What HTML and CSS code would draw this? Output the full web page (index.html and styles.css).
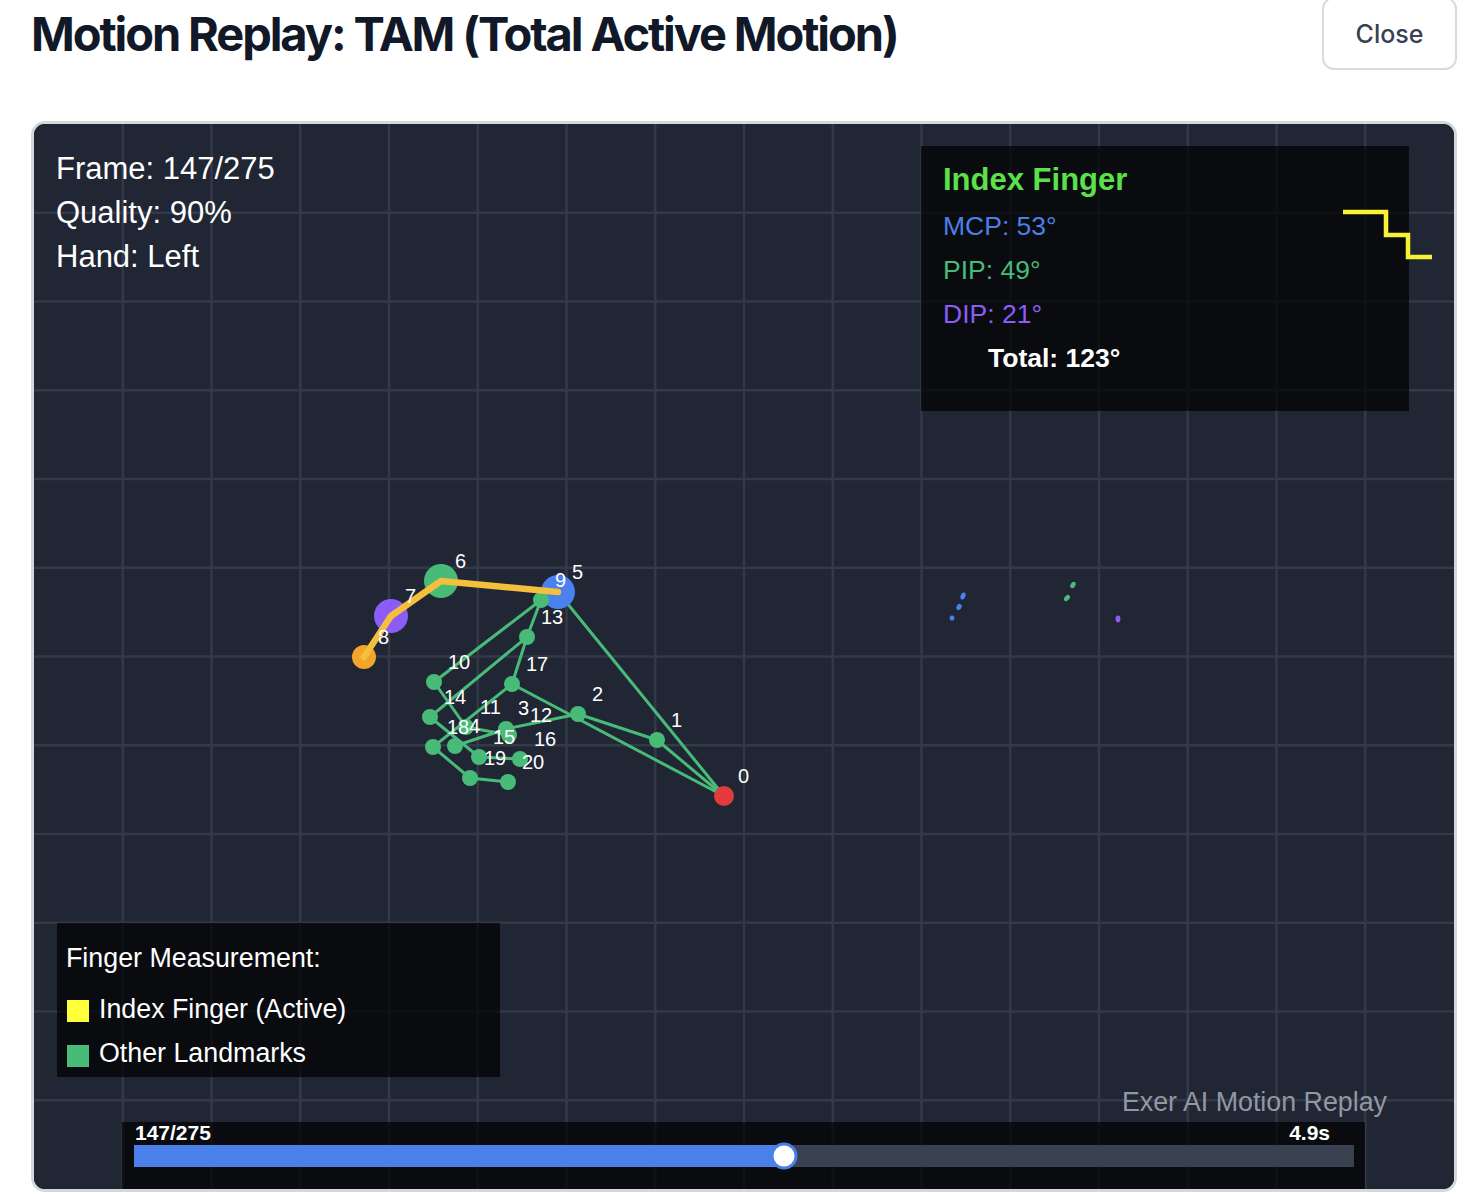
FILE: index.html
```html
<!DOCTYPE html>
<html lang="en">
<head>
<meta charset="utf-8">
<title>Motion Replay</title>
<link rel="stylesheet" href="styles.css">
</head>
<body>
<div class="page">
  <header class="header">
    <h1 class="title">Motion Replay: TAM (Total Active Motion)</h1>
    <button class="close-btn" type="button">Close</button>
  </header>
  <div class="stage">
    <svg class="replay" viewBox="0 0 1420 1065" xmlns="http://www.w3.org/2000/svg">
      <g transform="translate(-34 -124)">
        <rect class="bg" x="34" y="124" width="1420" height="1065"/>
        <path class="grid" d="M122.75 124V1189M211.5 124V1189M300.25 124V1189M389 124V1189M477.75 124V1189M566.5 124V1189M655.25 124V1189M744 124V1189M832.75 124V1189M921.5 124V1189M1010.25 124V1189M1099 124V1189M1187.75 124V1189M1276.5 124V1189M1365.25 124V1189M34 212.75H1454M34 301.5H1454M34 390.25H1454M34 479H1454M34 567.75H1454M34 656.5H1454M34 745.25H1454M34 834H1454M34 922.75H1454M34 1011.5H1454M34 1100.25H1454"/>

        <!-- info -->
        <text class="info" x="56" y="179">Frame: 147/275</text>
        <text class="info" x="56" y="223">Quality: 90%</text>
        <text class="info" x="56" y="267">Hand: Left</text>

        <!-- finger panel -->
        <rect class="panel" x="921" y="146" width="488" height="265"/>
        <text class="fp-title" x="943" y="190">Index Finger</text>
        <text class="fp-row mcp" x="943" y="235">MCP: 53°</text>
        <text class="fp-row pip" x="943" y="279">PIP: 49°</text>
        <text class="fp-row dip" x="943" y="323">DIP: 21°</text>
        <text class="fp-total" x="988" y="367">Total: 123°</text>
        <path class="step" d="M1343 212H1386V235H1408V257H1432"/>

        <!-- trail dots -->
        <g class="trail">
          <ellipse class="t-blue" cx="963" cy="596" rx="2.4" ry="3.6" transform="rotate(20 963 596)"/>
          <ellipse class="t-blue" cx="959" cy="607" rx="2.4" ry="3.2" transform="rotate(30 959 607)"/>
          <ellipse class="t-blue" cx="952" cy="618" rx="2.4" ry="2.6"/>
          <ellipse class="t-green" cx="1073" cy="585" rx="2.4" ry="3.4" transform="rotate(30 1073 585)"/>
          <ellipse class="t-green" cx="1067" cy="598" rx="2.4" ry="3.6" transform="rotate(40 1067 598)"/>
          <ellipse class="t-purple" cx="1118" cy="619" rx="2.4" ry="3.4"/>
        </g>

        <!-- hand skeleton -->
        <g class="bones">
          <line x1="724" y1="796" x2="657" y2="740"/>
          <line x1="657" y1="740" x2="578" y2="714"/>
          <line x1="578" y1="714" x2="506" y2="729"/>
          <line x1="506" y1="729" x2="455" y2="746"/>
          <line x1="724" y1="796" x2="558" y2="592"/>
          <line x1="558" y1="592" x2="541" y2="600"/>
          <line x1="541" y1="600" x2="434" y2="682"/>
          <line x1="434" y1="682" x2="466" y2="727"/>
          <line x1="466" y1="727" x2="509" y2="735"/>
          <line x1="541" y1="600" x2="527" y2="637"/>
          <line x1="527" y1="637" x2="430" y2="717"/>
          <line x1="430" y1="717" x2="479" y2="757"/>
          <line x1="479" y1="757" x2="520" y2="759"/>
          <line x1="527" y1="637" x2="512" y2="684"/>
          <line x1="724" y1="796" x2="512" y2="684"/>
          <line x1="512" y1="684" x2="433" y2="747"/>
          <line x1="433" y1="747" x2="470" y2="778"/>
          <line x1="470" y1="778" x2="508" y2="782"/>
        </g>

        <g class="joints">
          <circle class="j-red" cx="724" cy="796" r="10"/>
          <circle cx="657" cy="740" r="8"/>
          <circle cx="578" cy="714" r="8"/>
          <circle cx="506" cy="729" r="8"/>
          <circle cx="455" cy="746" r="8"/>
          <circle class="j-blue" cx="558" cy="592" r="17"/>
          <circle cx="441" cy="581" r="17"/>
          <circle class="j-purple" cx="391" cy="616" r="17"/>
          <circle class="j-orange" cx="364" cy="657" r="12"/>
          <circle cx="541" cy="600" r="8"/>
          <circle cx="434" cy="682" r="8"/>
          <circle cx="466" cy="727" r="8"/>
          <circle cx="509" cy="735" r="8"/>
          <circle cx="527" cy="637" r="8"/>
          <circle cx="430" cy="717" r="8"/>
          <circle cx="479" cy="757" r="8"/>
          <circle cx="520" cy="759" r="8"/>
          <circle cx="512" cy="684" r="8"/>
          <circle cx="433" cy="747" r="8"/>
          <circle cx="470" cy="778" r="8"/>
          <circle cx="508" cy="782" r="8"/>
        </g>

        <path class="index-line" d="M364 657L391 616L441 581L558 592"/>

        <g class="labels">
          <text x="738" y="783">0</text>
          <text x="671" y="727">1</text>
          <text x="592" y="701">2</text>
          <text x="518" y="715">3</text>
          <text x="469" y="733">4</text>
          <text x="572" y="579">5</text>
          <text x="455" y="568">6</text>
          <text x="405" y="603">7</text>
          <text x="378" y="644">8</text>
          <text x="555" y="587">9</text>
          <text x="448" y="669">10</text>
          <text x="480" y="714">11</text>
          <text x="530" y="722">12</text>
          <text x="541" y="624">13</text>
          <text x="444" y="704">14</text>
          <text x="493" y="744">15</text>
          <text x="534" y="746">16</text>
          <text x="526" y="671">17</text>
          <text x="447" y="734">18</text>
          <text x="484" y="765">19</text>
          <text x="522" y="769">20</text>
        </g>

        <!-- legend -->
        <rect class="panel" x="57" y="923" width="443" height="154"/>
        <text class="legend-title" x="66" y="967">Finger Measurement:</text>
        <rect class="sw-yellow" x="67" y="1000" width="22" height="22"/>
        <text class="legend-item" x="99" y="1018">Index Finger (Active)</text>
        <rect class="sw-green" x="67" y="1045" width="22" height="22"/>
        <text class="legend-item" x="99" y="1062">Other Landmarks</text>

        <text class="watermark" x="1387" y="1111">Exer AI Motion Replay</text>

        <!-- progress -->
        <rect class="panel" x="122" y="1122" width="1243" height="70"/>
        <text class="prog-text" x="135" y="1140">147/275</text>
        <text class="prog-text end" x="1330" y="1140">4.9s</text>
        <rect class="track" x="134" y="1145" width="1220" height="22"/>
        <rect class="fill" x="134" y="1145" width="650" height="22"/>
        <circle class="thumb" cx="784" cy="1156" r="12"/>
      </g>
    </svg>
  </div>
</div>
</body>
</html>
```

FILE: styles.css
```css
html, body {
  margin: 0;
  padding: 0;
  overflow: hidden;
  background: #ffffff;
}

.page {
  margin-top: -3px;
  padding: 0 15px 0 31px;
  font-family: Inter, "Liberation Sans", sans-serif;
}

.header {
  display: flex;
  align-items: center;
  justify-content: space-between;
  height: 73px;
}

.title {
  margin: 0;
  font-family: Inter, "Liberation Sans", sans-serif;
  font-size: 47px;
  font-weight: 700;
  letter-spacing: -2.1px;
  color: #111827;
  line-height: 1;
}

.close-btn {
  width: 135px;
  height: 73px;
  box-sizing: border-box;
  border: 2px solid #d8dbe0;
  border-radius: 12px;
  background: #ffffff;
  font-family: Inter, "Liberation Sans", sans-serif;
  font-size: 25px;
  font-weight: 500;
  color: #374151;
  padding: 0;
}

.stage {
  margin-top: 51px;
  width: 1420px;
  height: 1065px;
  border: 3px solid #d4d7dc;
  border-radius: 14px;
  overflow: hidden;
  background: #202634;
}

.replay {
  display: block;
  width: 1420px;
  height: 1065px;
  font-family: "Liberation Sans", Arial, sans-serif;
}

.bg { fill: #202634; }

.grid {
  stroke: #323947;
  stroke-width: 2.5;
  fill: none;
}

.panel { fill: #000; fill-opacity: 0.7; }

.info { fill: #ffffff; font-size: 31px; }

.fp-title { fill: #5be14a; font-size: 31px; font-weight: 700; }
.fp-row { font-size: 26.5px; }
.mcp { fill: #4a80e8; }
.pip { fill: #48bb78; }
.dip { fill: #8b5cf6; }
.fp-total { fill: #ffffff; font-size: 26.5px; font-weight: 700; }

.step {
  fill: none;
  stroke: #f8f236;
  stroke-width: 4.5;
}

.t-blue { fill: #4a80f0; }
.t-green { fill: #48bb78; }
.t-purple { fill: #8b5cf6; }

.bones line {
  stroke: #48bb78;
  stroke-width: 3;
}

.joints circle { fill: #48bb78; }
.joints .j-red { fill: #e23b3b; }
.joints .j-blue { fill: #4a80f0; }
.joints .j-purple { fill: #8b5cf6; }
.joints .j-orange { fill: #f2a52a; }

.index-line {
  fill: none;
  stroke: #f4bf3c;
  stroke-width: 6.5;
  stroke-linejoin: round;
  stroke-linecap: round;
}

.labels text { fill: #ffffff; font-size: 20px; }

.legend-title { fill: #ffffff; font-size: 26.8px; }
.legend-item { fill: #ffffff; font-size: 26.8px; }
.sw-yellow { fill: #ffff3c; }
.sw-green { fill: #48bb78; }

.watermark {
  fill: #9298a3;
  font-size: 26.8px;
  text-anchor: end;
}

.prog-text { fill: #ffffff; font-size: 21px; font-weight: 700; }
.prog-text.end { text-anchor: end; }

.track { fill: #394150; }
.fill { fill: #4a80ea; }
.thumb { fill: #ffffff; stroke: #4a80ea; stroke-width: 3; }
```
